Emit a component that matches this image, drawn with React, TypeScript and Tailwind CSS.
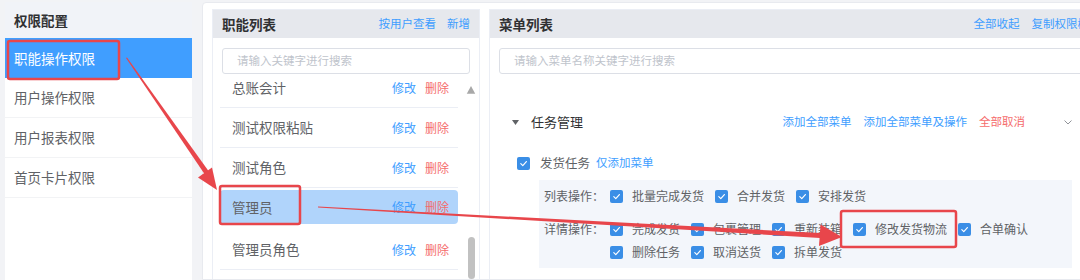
import React from 'react';

const sideItems = ['职能操作权限', '用户操作权限', '用户报表权限', '首页卡片权限'];
const roles = ['总账会计', '测试权限粘贴', '测试角色', '管理员', '管理员角色', '调度'];

function Check() {
  return (
    <span className="flex h-[13px] w-[13px] shrink-0 items-center justify-center rounded-[2px] bg-[#3a8ee6]">
      <svg width="9" height="9" viewBox="0 0 10 10" fill="none">
        <path d="M2 5.2 L4.2 7.3 L8.2 2.8" stroke="white" strokeWidth="1.3" strokeLinecap="round" strokeLinejoin="round" />
      </svg>
    </span>
  );
}

function Op({ label }: { label: string }) {
  return (
    <div className="mr-[11px] flex h-[22px] items-center">
      <Check />
      <span className="ml-[9px] text-[12px] leading-[22px] text-[#606266]">{label}</span>
    </div>
  );
}

export default function App() {
  return (
    <div className="relative flex h-[280px] w-[1080px] gap-[10px] overflow-hidden bg-[#f2f3f6] pl-[5px] pt-[2px] font-['Noto_Sans_CJK_SC','Liberation_Sans',sans-serif]">
      {/* left menu */}
      <aside className="flex w-[187px] shrink-0 flex-col bg-white">
        <div className="flex h-[36px] items-center bg-[#f1f3f8] pl-[9px] text-[13.5px] font-bold text-[#303133]">权限配置</div>
        {sideItems.map((s, i) => (
          <div
            key={s}
            className={`flex h-[40px] items-center pl-[9px] text-[13.5px] ${i === 0 ? 'bg-[#409eff] text-white' : 'border-b border-[#f2f3f5] text-[#606266]'}`}
          >
            {s}
          </div>
        ))}
      </aside>

      <div className="flex shrink-0 gap-[9px] rounded-t-[4px] border border-[#e8eaef] bg-white pl-[9px] pt-[6px]">
        {/* role list */}
        <section className="flex w-[268px] shrink-0 flex-col border border-b-0 border-[#ebeef5]">
          <div className="flex h-[28px] items-center bg-[#e6e8ed] px-[9px]">
            <span className="text-[13.5px] font-bold text-[#303133]">职能列表</span>
            <span className="ml-auto text-[11.5px] text-[#409eff]">按用户查看</span>
            <span className="ml-[11px] text-[11.5px] text-[#409eff]">新增</span>
          </div>
          <div className="mx-[9px] mt-[10px] flex h-[26px] items-center rounded-[3px] border border-[#dcdfe6] px-[14px] text-[11.5px] text-[#c0c4cc]">
            请输入关键字进行搜索
          </div>
          <div className="mt-[8px] flex flex-1 overflow-hidden">
            <div className="ml-[7px] w-[238px]">
              <div className="-mt-[14px]">
                {roles.map((r, i) => (
                  <div key={r} className={`h-[40px] ${i === 3 ? '' : 'border-b border-[#ebeef5]'}`}>
                    <div className={`flex items-center pl-[12px] pr-[9px] ${i === 3 ? 'mt-[2px] h-[34px] rounded-[4px] bg-[#b0d4fb]' : 'h-full'}`}>
                      <span className="text-[13.5px] text-[#606266]">{r}</span>
                      <span className="ml-auto text-[12px] text-[#409eff]">修改</span>
                      <span className="ml-[9px] text-[12px] text-[#f56c6c]">删除</span>
                    </div>
                  </div>
                ))}
              </div>
            </div>
            <div className="flex w-[21px] flex-col items-center pt-[4px]">
              <svg width="12" height="11" viewBox="0 0 12 11" className="ml-[4px]">
                <path d="M6 0 L12 11 L0 11 Z" fill="#a8a8a8" />
              </svg>
              <div className="ml-[5px] mt-[143px] h-[60px] w-[7px] rounded-[4px] bg-[#c1c1c1]" />
            </div>
          </div>
        </section>

        {/* menu list */}
        <section className="flex w-[610px] shrink-0 flex-col border border-b-0 border-[#ebeef5]">
          <div className="flex h-[28px] items-center justify-between bg-[#e6e8ed] px-[9px]">
            <span className="text-[13.5px] font-bold text-[#303133]">菜单列表</span>
            <div className="flex gap-[12px] text-[11.5px] text-[#409eff]">
              <span>全部收起</span>
              <span>复制权限树</span>
            </div>
          </div>
          <div className="mx-[9px] mt-[10px] flex h-[26px] items-center rounded-[3px] border border-[#dcdfe6] px-[14px] text-[11.5px] text-[#c0c4cc]">
            请输入菜单名称关键字进行搜索
          </div>
          <div className="ml-[9px] w-[573px]">
            <div className="mt-[36px] flex h-[24px] items-center pl-[13px]">
              <svg width="7" height="5" viewBox="0 0 7 5">
                <path d="M0 0 L7 0 L3.5 5 Z" fill="#606266" />
              </svg>
              <span className="ml-[12px] text-[13px] text-[#303133]">任务管理</span>
              <div className="ml-auto flex gap-[12px] text-[11.5px] text-[#409eff]">
                <span>添加全部菜单</span>
                <span>添加全部菜单及操作</span>
                <span className="text-[#f56c6c]">全部取消</span>
              </div>
              <svg width="8" height="5" viewBox="0 0 8 5" className="ml-[39px]">
                <path d="M0.5 0.5 L4 4 L7.5 0.5" stroke="#909399" strokeWidth="1" fill="none" />
              </svg>
            </div>
            <div className="mt-[17px] flex h-[24px] items-center pl-[18px]">
              <Check />
              <span className="ml-[10px] text-[12.5px] text-[#606266]">发货任务</span>
              <span className="ml-[6px] text-[11.5px] text-[#409eff]">仅添加菜单</span>
            </div>
            <div className="ml-[40px] mt-[5px] flex w-[533px] flex-col gap-[11px] bg-[#f3f6fb] py-[5px] pl-[5px]">
              <div className="flex">
                <span className="w-[66px] shrink-0 text-[12px] leading-[22px] text-[#606266]">列表操作：</span>
                <div className="flex flex-wrap">
                  <Op label="批量完成发货" />
                  <Op label="合并发货" />
                  <Op label="安排发货" />
                </div>
              </div>
              <div className="flex">
                <span className="w-[66px] shrink-0 text-[12px] leading-[22px] text-[#606266]">详情操作：</span>
                <div className="flex flex-wrap gap-y-[1px]">
                  <Op label="完成发货" />
                  <Op label="包裹管理" />
                  <Op label="重新装箱" />
                  <Op label="修改发货物流" />
                  <Op label="合单确认" />
                  <Op label="删除任务" />
                  <Op label="取消送货" />
                  <Op label="拆单发货" />
                </div>
              </div>
            </div>
          </div>
        </section>
      </div>

      {/* annotation overlay */}
      <svg className="pointer-events-none absolute left-0 top-0" width="1080" height="280" viewBox="0 0 1080 280">
        <g fill="none" stroke="#e8464b" strokeWidth="2.5">
          <rect x="8" y="41" width="111" height="38" rx="2" />
          <rect x="220" y="186" width="80" height="38" rx="2" />
          <rect x="841" y="211" width="115" height="36" rx="2" />
        </g>
        <g fill="#e8464b">
          <polygon points="126,58 127,57.5 208.5,171 204.5,174" />
          <polygon points="217,190 198,177.5 212,167.5" />
          <polygon points="318,206.5 318,207.5 820,238 820.5,233" />
          <polygon points="842,237 819,246 820.5,224.5" />
        </g>
      </svg>
    </div>
  );
}
